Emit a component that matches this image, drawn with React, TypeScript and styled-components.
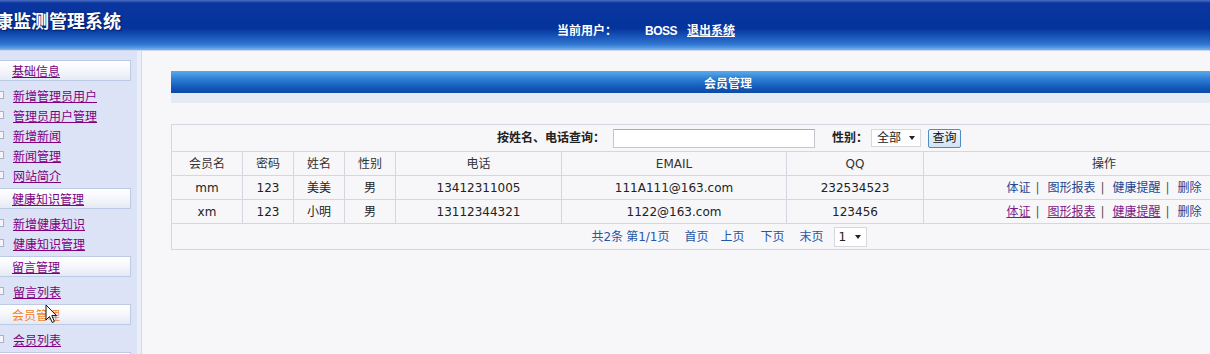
import React from 'react';
import styled, { createGlobalStyle } from 'styled-components';

const GlobalStyle = createGlobalStyle`
  html, body {
    margin: 0;
    padding: 0;
    overflow: hidden;
    background: #f7f7fa;
  }
  body {
    font-family: "DejaVu Sans", "Noto Sans CJK SC", sans-serif;
    font-size: 12px;
    color: #333;
  }
`;

const Page = styled.div`
  width: 1300px;
  height: 354px;
  display: flex;
  flex-direction: column;
`;

const TopBar = styled.div`
  height: 50px;
  flex: none;
  display: grid;
  grid-template-columns: 557px 1fr;
  color: #fff;
  background: linear-gradient(
    to bottom,
    #4d6fc4 0,
    #0b36a0 3px,
    #03339b 28px,
    #1852b8 36px,
    #2f74cf 44px,
    #4c91e0 47px,
    #7fb3ea 50px
  );
  border-bottom: 1px solid #c9d6ee;
`;

const SiteTitle = styled.div`
  margin-left: -23px;
  padding-top: 7px;
  font-size: 18px;
  font-weight: bold;
  white-space: nowrap;
  text-shadow: 0 0 2px #0b1f6a, 1px 1px 1px #0a256f;
`;

const UserInfo = styled.div`
  padding-top: 21px;
  font-weight: bold;
  font-size: 12px;
  white-space: nowrap;
  display: flex;
  align-items: baseline;
`;

const UserName = styled.span`
  margin-left: 28px;
  font-family: "Liberation Sans", sans-serif;
  letter-spacing: -0.5px;
`;

const Logout = styled.a`
  margin-left: 10px;
  color: #fff;
  text-decoration: underline;
`;

const Body = styled.div`
  flex: 1;
  display: flex;
  min-height: 0;
`;

const Sidebar = styled.div`
  position: relative;
  width: 137px;
  flex: none;
  background: #dde3f6;
  border-right: 4px solid #eaeef9;
  box-shadow: 1px 0 0 #d3d9e6;
  padding-top: 9px;
  overflow: hidden;
`;

const SectionHead = styled.div<{ $active?: boolean }>`
  margin-left: -4px;
  width: 135px;
  height: 21px;
  box-sizing: border-box;
  border: 1px solid #bccae6;
  background: linear-gradient(to bottom, #ffffff 0, #f7f8fc 45%, #e4e9f3 100%);
  padding-left: 15px;
  display: flex;
  align-items: center;
  color: ${p => (p.$active ? '#f2842c' : '#800080')};
  text-decoration: ${p => (p.$active ? 'none' : 'underline')};
`;

const LinkList = styled.div`
  padding: 4px 0 3px;
`;

const LinkRow = styled.div`
  height: 20px;
  margin-left: -4px;
  display: flex;
  align-items: center;
  gap: 9px;
  color: #800080;
  text-decoration: underline;
  &::before {
    content: '';
    width: 6px;
    height: 6px;
    border: 1px solid #a9b1c7;
    background: #f3f5fb;
    flex: none;
  }
`;

const CutHead = styled(SectionHead)`
  color: #222;
  text-decoration: none;
`;

const Cursor = styled.svg`
  position: absolute;
  left: 45px;
  top: 253px;
`;

const Main = styled.div`
  flex: 1;
  margin-left: 1px;
  padding: 20px 0 0 29px;
`;

const Content = styled.div`
  width: 1114px;
`;

const TitleBar = styled.div`
  height: 22px;
  display: flex;
  align-items: center;
  justify-content: center;
  color: #fff;
  font-weight: bold;
  background: linear-gradient(to bottom, #5aaae9 0, #2f80d6 35%, #1259b9 75%, #0c4aa6 100%);
  box-shadow: 0 10px 0 #e5ebf5;
  text-shadow: 0 0 1px #0a3d8f;
`;

const Grid = styled.table`
  margin-top: 31px;
  width: 100%;
  border-collapse: collapse;
  border: 1px solid #cfd3dc;
  background: #f7f7fa;
  td, th {
    border: 1px solid #d4d7df;
    padding: 0;
    text-align: center;
    font-weight: normal;
    line-height: 14px;
    white-space: nowrap;
  }
`;

const SearchCell = styled.td`
  height: 26px;
`;

const SearchLine = styled.div`
  display: flex;
  align-items: center;
  justify-content: center;
  padding-left: 2px;
`;

const Label = styled.b`
  color: #222;
`;

const TextBox = styled.div`
  width: 200px;
  height: 17px;
  margin-left: 8px;
  border: 1px solid #c3c6cd;
  border-top-color: #a9adb6;
  background: #fff;
`;

const GenderLabel = styled(Label)`
  margin-left: 17px;
`;

const Select = styled.div<{ $w: number }>`
  width: ${p => p.$w}px;
  height: 18px;
  box-sizing: border-box;
  border: 1px solid #d5d8de;
  background: #fff;
  display: flex;
  align-items: center;
  justify-content: space-between;
  padding: 0 5px;
  color: #222;
  &::after {
    content: '';
    border-left: 3.5px solid transparent;
    border-right: 3.5px solid transparent;
    border-top: 4px solid #222;
  }
`;

const GenderSelect = styled(Select)`
  margin-left: 3px;
`;

const QueryButton = styled.div`
  margin-left: 7px;
  width: 33px;
  height: 19px;
  box-sizing: border-box;
  border: 1px solid #4f8cc4;
  border-radius: 2px;
  background: linear-gradient(to bottom, #f1f7fd, #cfe2f4);
  display: flex;
  align-items: center;
  justify-content: center;
  color: #111;
`;

const HeadRow = styled.tr`
  height: 24px;
  color: #333;
`;

const DataRow = styled.tr`
  height: 24px;
  color: #222;
`;

const OpLink = styled.a<{ $visited?: boolean }>`
  color: ${p => (p.$visited ? '#7d1a86' : '#24468f')};
  text-decoration: ${p => (p.$visited ? 'underline' : 'none')};
`;

const Sep = styled.span`
  margin: 0 8px 0 5px;
  color: #555;
`;

const PagerCell = styled.td`
  height: 25px;
`;

const Pager = styled.div`
  display: flex;
  align-items: center;
  justify-content: center;
  color: #2556a7;
  padding-left: 2px;
`;

const PageLink = styled.span<{ $gap: number }>`
  margin-left: ${p => p.$gap}px;
`;

const PageSelect = styled(Select)`
  margin-left: 10px;
  height: 20px;
  padding: 0 5px 0 4px;
`;

type Section = { title: string; links: string[]; active?: boolean };

const sections: Section[] = [
  { title: '基础信息', links: ['新增管理员用户', '管理员用户管理', '新增新闻', '新闻管理', '网站简介'] },
  { title: '健康知识管理', links: ['新增健康知识', '健康知识管理'] },
  { title: '留言管理', links: ['留言列表'] },
  { title: '会员管理', links: ['会员列表'], active: true },
];

type Member = { user: string; pwd: string; name: string; sex: string; phone: string; email: string; qq: string; visited?: boolean };

const members: Member[] = [
  { user: 'mm', pwd: '123', name: '美美', sex: '男', phone: '13412311005', email: '111A111@163.com', qq: '232534523' },
  { user: 'xm', pwd: '123', name: '小明', sex: '男', phone: '13112344321', email: '1122@163.com', qq: '123456', visited: true },
];

const columns = ['会员名', '密码', '姓名', '性别', '电话', 'EMAIL', 'QQ', '操作'];
const widths = [71, 51, 51, 51, 166, 225, 137];

export default function App() {
  return (
    <Page>
      <GlobalStyle />
      <TopBar>
        <SiteTitle>健康监测管理系统</SiteTitle>
        <UserInfo>
          当前用户：
          <UserName>BOSS</UserName>
          <Logout>退出系统</Logout>
        </UserInfo>
      </TopBar>
      <Body>
        <Sidebar>
          {sections.map(s => (
            <React.Fragment key={s.title}>
              <SectionHead $active={s.active}>{s.title}</SectionHead>
              <LinkList>
                {s.links.map(l => (
                  <LinkRow key={l}>{l}</LinkRow>
                ))}
              </LinkList>
            </React.Fragment>
          ))}
          <CutHead>个人信息</CutHead>
          <Cursor width="13" height="20" viewBox="0 0 13 20">
            <path d="M1 1 L1 16 L4.5 12.5 L7.2 18.5 L9.4 17.5 L6.8 11.6 L11.5 11.6 Z" fill="#fff" stroke="#111" strokeWidth="1" strokeLinejoin="round" />
          </Cursor>
        </Sidebar>
        <Main>
          <Content>
            <TitleBar>会员管理</TitleBar>
            <Grid>
              <colgroup>
                {widths.map((w, i) => (
                  <col key={i} style={{ width: w }} />
                ))}
                <col />
              </colgroup>
              <tbody>
                <tr>
                  <SearchCell colSpan={8}>
                    <SearchLine>
                      <Label>按姓名、电话查询：</Label>
                      <TextBox />
                      <GenderLabel>性别：</GenderLabel>
                      <GenderSelect $w={50}>全部</GenderSelect>
                      <QueryButton>查询</QueryButton>
                    </SearchLine>
                  </SearchCell>
                </tr>
                <HeadRow>
                  {columns.map(c => (
                    <th key={c}>{c}</th>
                  ))}
                </HeadRow>
                {members.map(m => (
                  <DataRow key={m.user}>
                    <td>{m.user}</td>
                    <td>{m.pwd}</td>
                    <td>{m.name}</td>
                    <td>{m.sex}</td>
                    <td>{m.phone}</td>
                    <td>{m.email}</td>
                    <td>{m.qq}</td>
                    <td>
                      <OpLink $visited={m.visited}>体证</OpLink>
                      <Sep>|</Sep>
                      <OpLink $visited={m.visited}>图形报表</OpLink>
                      <Sep>|</Sep>
                      <OpLink $visited={m.visited}>健康提醒</OpLink>
                      <Sep>|</Sep>
                      <OpLink>删除</OpLink>
                    </td>
                  </DataRow>
                ))}
                <tr>
                  <PagerCell colSpan={8}>
                    <Pager>
                      <span>共2条</span>
                      <PageLink $gap={3}>第1/1页</PageLink>
                      <PageLink $gap={15}>首页</PageLink>
                      <PageLink $gap={12}>上页</PageLink>
                      <PageLink $gap={16}>下页</PageLink>
                      <PageLink $gap={15}>末页</PageLink>
                      <PageSelect $w={33}>1</PageSelect>
                    </Pager>
                  </PagerCell>
                </tr>
              </tbody>
            </Grid>
          </Content>
        </Main>
      </Body>
    </Page>
  );
}
